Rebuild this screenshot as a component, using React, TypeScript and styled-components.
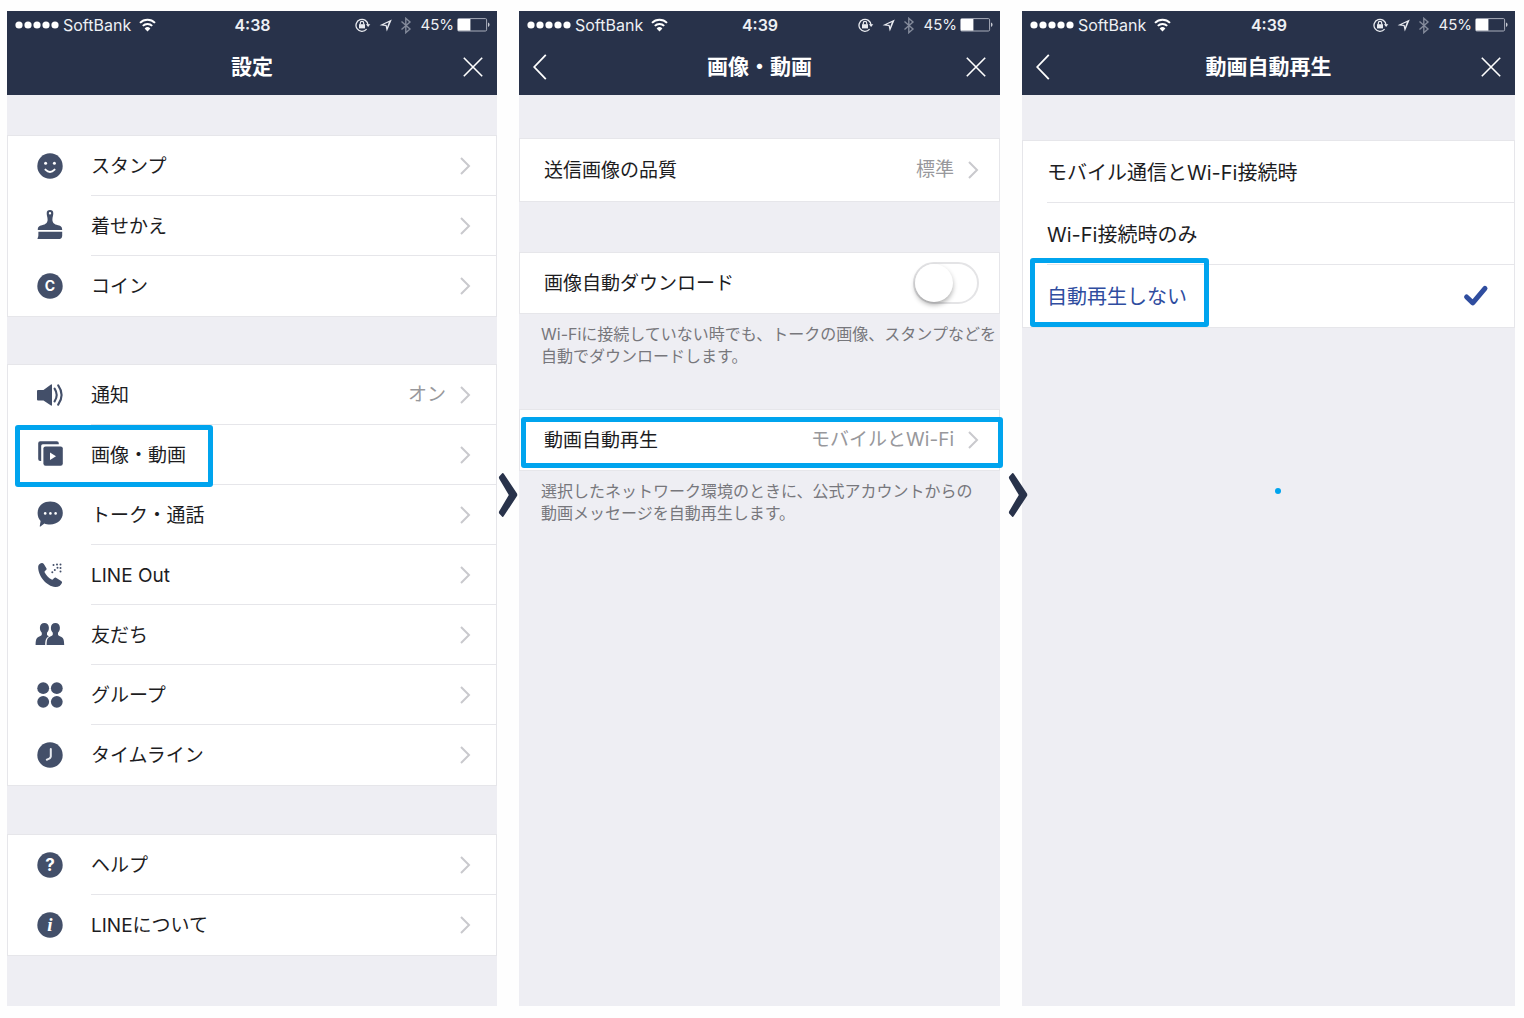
import React, { useState } from "react";
import styled, { createGlobalStyle, css } from "styled-components";

const color = {
  bar: "#28324a",
  screen: "#eeeef3",
  line: "#e6e6ea",
  icon: "#434f69",
  text: "#1d1d1f",
  muted: "#98989c",
  note: "#77777c",
  chevron: "#c9c9cd",
  selected: "#2f4d9f",
  mark: "#00a4ee",
};

const GlobalStyle = createGlobalStyle`
  *, *::before, *::after { box-sizing: border-box; }
  body {
    margin: 0;
    background: #fefefe;
    color: ${color.text};
    font-family: Inter, "Noto Sans CJK JP", sans-serif;
  }
  button, input { font: inherit; color: inherit; margin: 0; }
  h2, p { margin: 0; }
  svg { display: block; flex: none; }
`;

const Board = styled.main`
  display: grid;
  grid-template-columns: 490fr 481fr 493fr;
  gap: 22px;
  min-height: 100vh;
  padding: 11px 9px 12px 7px;
`;

const Screen = styled.section`
  position: relative;
  min-width: 0;
  background: ${color.screen};
`;

const Header = styled.header`
  background: ${color.bar};
  color: #fff;
`;

const StatusBar = styled.div`
  display: grid;
  grid-template-columns: 1fr auto 1fr;
  align-items: center;
  height: 28px;
  padding: 0 7px 0 8px;
  font-size: 16px;
  line-height: 20px;
  color: #eef0f4;
`;

const StatusSide = styled.div<{ $end?: boolean }>`
  display: flex;
  align-items: center;
  gap: ${(p) => (p.$end ? 8 : 4)}px;
  justify-content: ${(p) => (p.$end ? "flex-end" : "flex-start")};
`;

const Carrier = styled.span`
  margin-right: 4px;
`;

const Power = styled.span`
  display: flex;
  align-items: center;
  gap: 3px;
  font-size: 15px;
`;

const Time = styled.time`
  font-weight: 600;
`;

const NavBar = styled.div`
  display: grid;
  grid-template-columns: 48px 1fr 48px;
  align-items: center;
  height: 56px;
`;

const Title = styled.h2`
  grid-column: 2;
  text-align: center;
  font-size: 21px;
  line-height: 28px;
  font-weight: 600;
`;

const NavButton = styled.button<{ $side: "left" | "right" }>`
  display: flex;
  align-items: center;
  height: 56px;
  padding: 0 14px;
  border: 0;
  background: none;
  cursor: pointer;
  grid-row: 1;
  ${(p) =>
    p.$side === "left"
      ? css`grid-column: 1; justify-content: flex-start;`
      : css`grid-column: 3; justify-content: flex-end;`}
`;

const Group = styled.div<{ $gap: number }>`
  margin-top: ${(p) => p.$gap}px;
  border: 1px solid ${color.line};
  background: #fff;
`;

const rowStyle = css<{ $height: number }>`
  position: relative;
  display: flex;
  width: 100%;
  height: ${(p) => p.$height}px;
  padding: 0;
  border: 0;
  background: none;
  font-size: 19px;
  text-align: left;
  cursor: pointer;
`;

const RowButton = styled.button<{ $height: number }>`
  ${rowStyle}
`;

const RowLabel = styled.label<{ $height: number }>`
  ${rowStyle}
`;

const ChoiceRow = styled(RowLabel)<{ $active: boolean }>`
  font-size: 20px;
  color: ${(p) => (p.$active ? color.selected : color.text)};
`;

const Lead = styled.span<{ $wide?: boolean }>`
  flex: none;
  display: flex;
  align-items: center;
  justify-content: center;
  width: ${(p) => (p.$wide ? 83 : 24)}px;
`;

const RowBody = styled.span<{ $end: number }>`
  flex: 1;
  display: flex;
  align-items: center;
  gap: 14px;
  min-width: 0;
  padding-right: ${(p) => p.$end}px;
  border-bottom: 1px solid ${color.line};
  line-height: 28px;
  white-space: nowrap;

  *:last-child > & {
    border-bottom-color: transparent;
  }
`;

const RowText = styled.span`
  flex: 1;
  padding-top: 3px;
`;

const Value = styled.span`
  padding-top: 1px;
  color: ${color.muted};
`;

const Note = styled.p`
  padding: 9px 0 0 22px;
  font-size: 16px;
  line-height: 22px;
  color: ${color.note};
  white-space: nowrap;
`;

const Toggle = styled.input`
  appearance: none;
  flex: none;
  width: 66px;
  height: 42px;
  border: 2px solid #e4e4e6;
  border-radius: 21px;
  background: #fff;
  cursor: pointer;

  &::before {
    content: "";
    display: block;
    width: 38px;
    height: 38px;
    border-radius: 50%;
    background: #fff;
    box-shadow: 0 3px 5px rgba(0, 0, 0, 0.3);
  }

  &:checked {
    background: #4cd964;
  }

  &:checked::before {
    margin-left: 24px;
  }
`;

const Radio = styled.input`
  appearance: none;
  width: 0;
  height: 0;
`;

const Mark = styled.span<{ $inset: string; $width?: number }>`
  position: absolute;
  inset: ${(p) => p.$inset};
  width: ${(p) => (p.$width ? `${p.$width}px` : "auto")};
  border: 5px solid ${color.mark};
  border-radius: 3px;
  z-index: 1;
  pointer-events: none;
`;

const Step = styled.span<{ $left: number }>`
  position: absolute;
  top: 461px;
  left: ${(p) => p.$left}px;
  z-index: 2;
`;

const Dot = styled.span`
  position: absolute;
  top: 477px;
  left: 51.4%;
  width: 6px;
  height: 6px;
  border-radius: 50%;
  background: ${color.mark};
`;

const Chevron = () => (
  <svg width="11" height="20" viewBox="0 0 11 20" fill="none" stroke={color.chevron} strokeWidth="2">
    <path d="M1 2l8 8-8 8" />
  </svg>
);

const StepArrow = ({ left }: { left: number }) => (
  <Step $left={left}>
    <svg width="20" height="46" viewBox="0 0 20 46">
      <path
        d="M1.2 4.5 4.2 1.2Q5 .6 5.8 1.8L19 21.6Q19.6 23 19 24L5.800 44Q5 45.400 4.200 44.700L1.200 41.400Q.600 40.500 1.200 39.300L10.800 23 1.200 6.700Q.6 5.500 1.200 4.500Z"
        fill={color.bar}
      />
    </svg>
  </Step>
);

const Signal = () => (
  <svg width="44" height="8" viewBox="0 0 44 8" fill="#fff">
    {[4, 13, 22, 31, 40].map((x) => (
      <circle key={x} cx={x} cy="4" r="3.6" />
    ))}
  </svg>
);

const Wifi = () => (
  <svg width="17" height="14" viewBox="0 0 17 14" fill="none" stroke="#fff" strokeWidth="2">
    <path d="M1 4.9a10.6 10.6 0 0 1 15 0" />
    <path d="M3.8 7.9a6.7 6.7 0 0 1 9.4 0" />
    <path d="M8.5 13.4 5.6 10.4a4.1 4.1 0 0 1 5.8 0z" fill="#fff" stroke="none" />
  </svg>
);

const StatusIcons = () => (
  <>
    <svg width="16" height="14" viewBox="0 0 16 14" fill="none" stroke="#e9ebf0" strokeWidth="1.3">
      <path d="M11.6 11.2A6 6 0 1 1 13 7" />
      <path d="M10.9 6.3h4.4L13.1 9z" fill="#e9ebf0" stroke="none" />
      <path d="M4 6.2h6v4.2H4z" fill="#e9ebf0" stroke="none" />
      <path d="M5.300 6.600V5a1.700 1.700 0 0 1 3.400 0v1.600" strokeWidth="1.200" />
    </svg>
    <svg width="13" height="13" viewBox="0 0 13 13" fill="#e9ebf0">
      <path fillRule="evenodd" d="M12.800.4 7.800 12.400 6.600 6.900.6 6.200ZM9.800 3.200 4.600 5.500 7.600 5.900 8.100 8Z" />
    </svg>
    <svg width="12" height="17" viewBox="0 0 12 17" fill="none" stroke="#848b9b" strokeWidth="1.4">
      <path d="M1.5 4.5l8.5 7.6-4.2 3.6V1.3L10 4.9 1.5 12.5" />
    </svg>
  </>
);

const Battery = () => (
  <svg width="33" height="14" viewBox="0 0 33 14">
    <rect x=".6" y=".6" width="29" height="12.4" rx="1.2" fill="none" stroke="#a9aebb" strokeWidth="1" />
    <rect x="1" y="1" width="12.4" height="11.6" fill="#fff" />
    <path d="M31 4.6q1.6.6 1.6 2.2T31 9z" fill="#c5c9d2" />
  </svg>
);

const Close = () => (
  <svg width="20" height="20" viewBox="0 0 20 20" stroke="#fff" strokeWidth="1.6">
    <path d="M.8.8l18.4 18.4M19.2.8.8 19.2" />
  </svg>
);

const Back = () => (
  <svg width="14" height="26" viewBox="0 0 14 26" fill="none" stroke="#fff" strokeWidth="1.8">
    <path d="M12.8.8 1.2 13l11.6 12.2" />
  </svg>
);

const Check = () => (
  <svg width="26" height="24" viewBox="0 0 26 24" fill="none" stroke={color.selected} strokeWidth="5" strokeLinecap="round" strokeLinejoin="round">
    <path d="M3.6 13 9.8 18.8 22 4.400" />
  </svg>
);

const Icon = ({ children }: { children: React.ReactNode }) => (
  <svg width="32" height="32" viewBox="-16 -16 32 32" fill={color.icon} aria-hidden="true">
    {children}
  </svg>
);

const Disc = () => <circle r="12.7" />;

const StampIcon = (
  <Icon>
    <Disc />
    <circle cx="-4.4" cy="-2.8" r="1.500" fill="#fff" />
    <circle cx="4.4" cy="-2.8" r="1.500" fill="#fff" />
    <path d="M-4.6 3.6Q0 8.2 4.6 3.6" fill="none" stroke="#fff" strokeWidth="1.900" strokeLinecap="round" />
  </Icon>
);

const BrushIcon = (
  <Icon>
    <path
      fillRule="evenodd"
      d="M0-16A3.3 3.3 0 0 1 3.3-12.7C3.3-10 2.4-9 2.4-6.4 2.4-3.2 4-1.6 8-.7 11 0 12.2.9 12.2 4H-12.2C-12.2.9-11 0-8-.7-4-1.6-2.4-3.2-2.4-6.4-2.4-9-3.3-10-3.3-12.7A3.3 3.3 0 0 1 0-16ZM0-13.9A1.2 1.2 0 1 0 0-11.5 1.2 1.2 0 1 0 0-13.9Z"
    />
    <path d="M-11.6 5.8H12.2V10Q12 12.8 10 13H-12.6Q-11.2 10-11.6 5.8Z" />
  </Icon>
);

const CoinIcon = (
  <Icon>
    <Disc />
    <text y="5" textAnchor="middle" fontSize="14" fontWeight="700" fill="#fff">C</text>
  </Icon>
);

const SpeakerIcon = (
  <Icon>
    <path d="M-12-5H-6.5L1-10.6Q2-11 2-10V10Q2 11 1 10.6L-6.5 5.6H-12Q-13 5.6-13 4.6V-4Q-13-5-12-5Z" />
    <path d="M4.6-6.4Q8.8 0 4.6 6.4M8.2-9.6Q15 0 8.2 9.6" fill="none" stroke={color.icon} strokeWidth="2.1" strokeLinecap="round" />
  </Icon>
);

const MediaIcon = (
  <Icon>
    <path d="M8.8-11.8V-10.8H-7.2Q-8.8-10.8-8.8-9.2V6H-9.8Q-11.8 6-11.8 4V-11.8Q-11.8-13.8-9.8-13.8H6.8Q8.8-13.8 8.8-11.8Z" />
    <rect x="-6.6" y="-8.6" width="19.4" height="19.4" rx="2.2" />
    <path d="M0-2.4 6 1.3 0 5z" fill="#fff" />
  </Icon>
);

const TalkIcon = (
  <Icon>
    <path d="M.2-13.400C7.400-13.400 12.800-8.600 12.800-2S7.400 9.400.2 9.400C-2.400 9.400-4.200 9-5.600 8.400L-9.600 11.600Q-10.400 12-10.200 11L-9.400 6C-11.400 4-12.400 1.200-12.400-2-12.400-8.600-7-13.400.2-13.400Z" />
    <circle cx="-4.8" cy="-1.6" r="1.3" fill="#fff" />
    <circle cx=".4" cy="-1.6" r="1.3" fill="#fff" />
    <circle cx="5.6" cy="-1.6" r="1.3" fill="#fff" />
  </Icon>
);

const PhoneIcon = (
  <Icon>
    <path d="M-11.8-8.4C-11.6-10.400-9.500-11.800-8-11.900-7.300-11.900-6.700-11.600-6.200-11L-3.600-6.800C-3.200-6-3.400-5.400-4-4.900L-5.200-3.800C-5.600-3.400-5.600-3-5.300-2.500-3.800.4-1.400 2.900 1.700 4.500 2.200 4.800 2.600 4.700 3 4.300L4.200 3C4.800 2.400 5.400 2.300 6 2.700L11.200 6C12 6.500 12.200 7.200 11.900 8 11 10.500 8.300 12.200 5.300 12-3.300 11.500-12.300 1-11.800-8.400Z" />
    {[[3.500, -10], [7, -10.500], [10.500, -10.500], [7.500, -7.200], [4.800, -5], [10.500, -7], [10.500, -3.500], [2.300, -2.800]].map(([x, y]) => (
      <circle key={`${x} ${y}`} cx={x} cy={y} r="1" />
    ))}
  </Icon>
);

const FriendsIcon = (
  <Icon>
    <path d="M-5.6-12C-2.900-12-1.100-10-1.100-7.300-1.100-4.800-2-3.400-3-2.300V0C-2.400.7-1.600 1-1 1.300-3.800 2.600-4.800 5-4.800 10H-14.400C-14.400 4.800-13.600 2.800-11.200 1.700-9.600 1-8.400.9-8.200-.4V-2.300C-9.300-3.400-10.100-4.800-10.100-7.300-10.100-10-8.300-12-5.600-12Z" />
    <path d="M5.400-12C8.100-12 9.900-10 9.900-7.300 9.900-4.800 9-3.400 8-2.300V-.4C8.200.9 9.400 1 11 1.700 13.400 2.800 14.200 4.800 14.200 10H-3.400C-3.400 4.800-2.600 2.800-.2 1.700 1.400 1 2.600.9 2.800-.4V-2.300C1.700-3.400.9-4.800.9-7.300.9-10 2.700-12 5.400-12Z" />
  </Icon>
);

const GroupIcon = (
  <Icon>
    <circle cx="-6.8" cy="-6.8" r="5.9" />
    <circle cx="6.8" cy="-6.8" r="5.9" />
    <circle cx="-6.8" cy="6.8" r="5.9" />
    <circle cx="6.8" cy="6.8" r="5.9" />
  </Icon>
);

const TimelineIcon = (
  <Icon>
    <Disc />
    <path d="M.8-6V1.500Q.6 3.600-3.200 4.800" fill="none" stroke="#e8eaf0" strokeWidth="2" strokeLinecap="round" />
  </Icon>
);

const HelpIcon = (
  <Icon>
    <Disc />
    <text y="6" textAnchor="middle" fontSize="17" fontWeight="700" fill="#fff">?</text>
  </Icon>
);

const AboutIcon = (
  <Icon>
    <Disc />
    <text y="6" textAnchor="middle" fontSize="19" fontWeight="700" fontStyle="italic" fontFamily="Liberation Serif, serif" fill="#fff">i</text>
  </Icon>
);

function ScreenHeader({ title, time, back }: { title: string; time: string; back?: boolean }) {
  return (
    <Header>
      <StatusBar>
        <StatusSide>
          <Signal />
          <Carrier>SoftBank</Carrier>
          <Wifi />
        </StatusSide>
        <Time>{time}</Time>
        <StatusSide $end>
          <StatusIcons />
          <Power>
            45%
            <Battery />
          </Power>
        </StatusSide>
      </StatusBar>
      <NavBar>
        {back && (
          <NavButton $side="left" aria-label="戻る">
            <Back />
          </NavButton>
        )}
        <Title>{title}</Title>
        <NavButton $side="right" aria-label="閉じる">
          <Close />
        </NavButton>
      </NavBar>
    </Header>
  );
}

type LinkRowProps = {
  label: string;
  value?: string;
  icon?: React.ReactNode;
  height?: number;
  mark?: React.ReactNode;
};

function LinkRow({ label, value, icon, height = 60, mark }: LinkRowProps) {
  return (
    <RowButton $height={height}>
      <Lead $wide={!!icon}>{icon}</Lead>
      <RowBody $end={icon ? 25 : 20}>
        <RowText>{label}</RowText>
        {value && <Value>{value}</Value>}
        <Chevron />
      </RowBody>
      {mark}
    </RowButton>
  );
}

const playModes = ["モバイル通信とWi-Fi接続時", "Wi-Fi接続時のみ", "自動再生しない"];

export default function App() {
  const [download, setDownload] = useState(false);
  const [mode, setMode] = useState(playModes[2]);

  return (
    <>
      <GlobalStyle />
      <Board>
        <Screen>
          <ScreenHeader title="設定" time="4:38" />
          <Group $gap={40}>
            <LinkRow icon={StampIcon} label="スタンプ" />
            <LinkRow icon={BrushIcon} label="着せかえ" />
            <LinkRow icon={CoinIcon} label="コイン" />
          </Group>
          <Group $gap={47}>
            <LinkRow icon={SpeakerIcon} label="通知" value="オン" />
            <LinkRow icon={MediaIcon} label="画像・動画" mark={<Mark $inset="0 auto -2px 7px" $width={198} />} />
            <LinkRow icon={TalkIcon} label="トーク・通話" />
            <LinkRow icon={PhoneIcon} label="LINE Out" />
            <LinkRow icon={FriendsIcon} label="友だち" />
            <LinkRow icon={GroupIcon} label="グループ" />
            <LinkRow icon={TimelineIcon} label="タイムライン" />
          </Group>
          <Group $gap={48}>
            <LinkRow icon={HelpIcon} label="ヘルプ" />
            <LinkRow icon={AboutIcon} label="LINEについて" />
          </Group>
        </Screen>

        <Screen>
          <StepArrow left={-21} />
          <ScreenHeader title="画像・動画" time="4:39" back />
          <Group $gap={43}>
            <LinkRow height={62} label="送信画像の品質" value="標準" />
          </Group>
          <Group $gap={50}>
            <RowLabel $height={60}>
              <Lead />
              <RowBody $end={20}>
                <RowText>画像自動ダウンロード</RowText>
                <Toggle type="checkbox" role="switch" checked={download} onChange={(e) => setDownload(e.target.checked)} />
              </RowBody>
            </RowLabel>
          </Group>
          <Note>
            Wi-Fiに接続していない時でも、トークの画像、スタンプなどを
            <br />
            自動でダウンロードします。
          </Note>
          <Group $gap={42}>
            <LinkRow label="動画自動再生" value="モバイルとWi-Fi" mark={<Mark $inset="7px -4px 2px 1px" />} />
          </Group>
          <Note>
            選択したネットワーク環境のときに、公式アカウントからの
            <br />
            動画メッセージを自動再生します。
          </Note>
        </Screen>

        <Screen>
          <StepArrow left={-14} />
          <ScreenHeader title="動画自動再生" time="4:39" back />
          <Group $gap={45}>
            {playModes.map((m) => (
              <ChoiceRow key={m} $height={62} $active={m === mode}>
                <Lead>
                  <Radio type="radio" name="autoplay" checked={m === mode} onChange={() => setMode(m)} />
                </Lead>
                <RowBody $end={25}>
                  <RowText>{m}</RowText>
                  {m === mode && <Check />}
                </RowBody>
                {m === playModes[2] && <Mark $inset="-7px auto 0 7px" $width={179} />}
              </ChoiceRow>
            ))}
          </Group>
          <Dot />
        </Screen>
      </Board>
    </>
  );
}
